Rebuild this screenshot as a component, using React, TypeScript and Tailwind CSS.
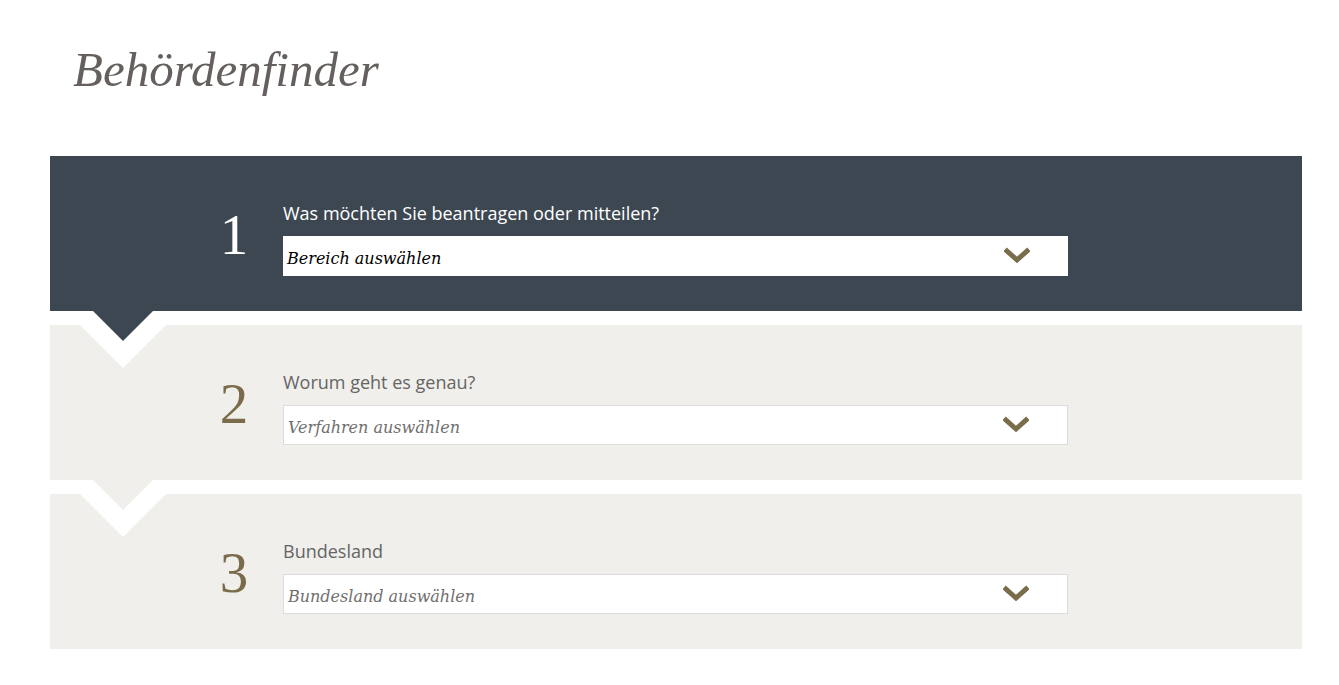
const STEPS = [
  { n: '1', label: 'Was möchten Sie beantragen oder mitteilen?', placeholder: 'Bereich auswählen', active: true },
  { n: '2', label: 'Worum geht es genau?', placeholder: 'Verfahren auswählen', active: false },
  { n: '3', label: 'Bundesland', placeholder: 'Bundesland auswählen', active: false },
]

const SANS = 'font-["Open_Sans","Noto_Sans",sans-serif]'
const SERIF = 'font-["DejaVu_Serif","Liberation_Serif",serif]'
const Z = ['z-30', 'z-20', 'z-10']

function Chevron() {
  return (
    <svg width="26" height="18" viewBox="0 0 26 18" className="shrink-0">
      <path d="M3 4 L13 13 L23 4" fill="none" stroke="#7a6d4b" strokeWidth="5" strokeLinecap="square" />
    </svg>
  )
}

function Step({ n, label, placeholder, active, last, z }: { n: string; label: string; placeholder: string; active: boolean; last: boolean; z: string }) {
  const bg = active ? 'bg-[#3d4752]' : 'bg-[#f0efeb]'
  return (
    <div className={`relative flex h-[155px] ${bg} ${z}`}>
      {/* arrow pointing into the next step, with a white border */}
      {!last && (
        <>
          <div className="absolute left-[16px] top-full h-0 w-0 border-x-[57px] border-t-[57px] border-x-transparent border-t-white" />
          <div
            className={`absolute left-[43px] top-full h-0 w-0 border-x-[30px] border-t-[30px] border-x-transparent ${active ? 'border-t-[#3d4752]' : 'border-t-[#f0efeb]'}`}
          />
        </>
      )}
      <div className="ml-[159px] flex w-[50px] items-center justify-center pt-[2px]">
        <span className={`font-["Liberation_Serif",serif] text-[57px] leading-none ${active ? 'text-white' : 'text-[#7a6c4a]'}`}>{n}</span>
      </div>
      <div className="ml-[24px] flex flex-col pt-[45px]">
        <label className={`${SANS} text-[18px] leading-[24px] ${active ? 'text-white' : 'text-[#656565]'}`}>{label}</label>
        <div
          className={`mt-[11px] flex h-[40px] w-[785px] items-center justify-between bg-white pl-[4px] pr-[38px] ${active ? '' : 'border border-[#dcdcdc]'}`}
        >
          <span className={`${SERIF} pt-[5px] text-[16px] italic ${active ? 'text-black' : 'text-[#6f6f6f]'}`}>{placeholder}</span>
          <Chevron />
        </div>
      </div>
    </div>
  )
}

export default function App() {
  return (
    <div className="min-h-screen bg-white pb-10">
      <h1 className={`font-["Liberation_Serif",serif] pl-[73px] pt-[40px] text-[49px] italic leading-[60px] text-[#65605e]`}>Behördenfinder</h1>
      <div className="mx-[50px] mt-[56px] flex w-[1252px] flex-col gap-[14px]">
        {STEPS.map((s, i) => (
          <Step key={s.n} {...s} z={Z[i]} last={i === STEPS.length - 1} />
        ))}
      </div>
    </div>
  )
}
